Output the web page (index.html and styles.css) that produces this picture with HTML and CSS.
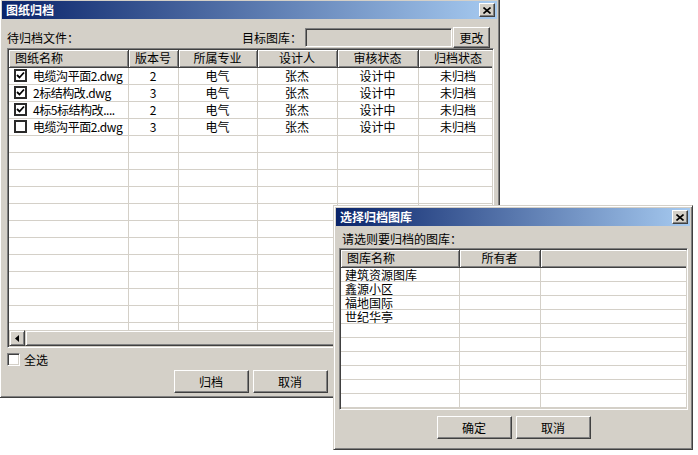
FILE: index.html
```html
<!DOCTYPE html>
<html lang="zh-CN">
<head>
    <meta charset="UTF-8">
    <title>图纸归档</title>
    <link rel="stylesheet" href="styles.css">
</head>
<body>

<div class="desktop">

    <!-- main dialog -->
    <div class="window win-archive">
        <div class="titlebar">
            <span class="title">图纸归档</span>
            <span class="close-btn">
                <svg width="8" height="7" viewBox="0 0 8 7"><path d="M0.5 0.5 L7.5 6.5 M7.5 0.5 L0.5 6.5" stroke="#000" stroke-width="1.6"/></svg>
            </span>
        </div>
        <div class="body">
            <div class="toolbar">
                <span class="label">待归档文件：</span>
                <span class="spacer"></span>
                <span class="label">目标图库：</span>
                <span class="textbox"></span>
                <button class="btn btn-small">更改</button>
            </div>

            <div class="listview list-files">
                <div class="list-inner">
                    <table class="grid">
                        <colgroup>
                            <col style="width:119px">
                            <col style="width:50px">
                            <col style="width:79px">
                            <col style="width:80px">
                            <col style="width:81px">
                            <col style="width:80px">
                        </colgroup>
                        <thead>
                            <tr>
                                <th class="left">图纸名称</th>
                                <th>版本号</th>
                                <th>所属专业</th>
                                <th>设计人</th>
                                <th>审核状态</th>
                                <th>归档状态</th>
                            </tr>
                        </thead>
                        <tbody>
                            <tr>
                                <td class="name"><div class="cell-flex"><span class="check"><svg width="9" height="9" viewBox="0 0 9 9"><path d="M1 4 L3.5 6.5 L8 1.5" stroke="#000" stroke-width="1.8" fill="none"/></svg></span><span class="file">电缆沟平面2.dwg</span></div></td>
                                <td>2</td><td>电气</td><td>张杰</td><td>设计中</td><td>未归档</td>
                            </tr>
                            <tr>
                                <td class="name"><div class="cell-flex"><span class="check"><svg width="9" height="9" viewBox="0 0 9 9"><path d="M1 4 L3.5 6.5 L8 1.5" stroke="#000" stroke-width="1.8" fill="none"/></svg></span><span class="file">2标结构改.dwg</span></div></td>
                                <td>3</td><td>电气</td><td>张杰</td><td>设计中</td><td>未归档</td>
                            </tr>
                            <tr>
                                <td class="name"><div class="cell-flex"><span class="check"><svg width="9" height="9" viewBox="0 0 9 9"><path d="M1 4 L3.5 6.5 L8 1.5" stroke="#000" stroke-width="1.8" fill="none"/></svg></span><span class="file">4标5标结构改....</span></div></td>
                                <td>2</td><td>电气</td><td>张杰</td><td>设计中</td><td>未归档</td>
                            </tr>
                            <tr>
                                <td class="name"><div class="cell-flex"><span class="check"></span><span class="file">电缆沟平面2.dwg</span></div></td>
                                <td>3</td><td>电气</td><td>张杰</td><td>设计中</td><td>未归档</td>
                            </tr>
                            <tr><td></td><td></td><td></td><td></td><td></td><td></td></tr>
                            <tr><td></td><td></td><td></td><td></td><td></td><td></td></tr>
                            <tr><td></td><td></td><td></td><td></td><td></td><td></td></tr>
                            <tr><td></td><td></td><td></td><td></td><td></td><td></td></tr>
                            <tr><td></td><td></td><td></td><td></td><td></td><td></td></tr>
                            <tr><td></td><td></td><td></td><td></td><td></td><td></td></tr>
                            <tr><td></td><td></td><td></td><td></td><td></td><td></td></tr>
                            <tr><td></td><td></td><td></td><td></td><td></td><td></td></tr>
                            <tr><td></td><td></td><td></td><td></td><td></td><td></td></tr>
                            <tr><td></td><td></td><td></td><td></td><td></td><td></td></tr>
                            <tr><td></td><td></td><td></td><td></td><td></td><td></td></tr>
                            <tr><td></td><td></td><td></td><td></td><td></td><td></td></tr>
                        </tbody>
                    </table>
                </div>
                <div class="hscroll">
                    <span class="scroll-btn">
                        <svg width="4" height="7" viewBox="0 0 4 7"><path d="M4 0 L0 3.5 L4 7 Z" fill="#000"/></svg>
                    </span>
                    <span class="scroll-thumb"></span>
                </div>
            </div>

            <div class="select-all">
                <span class="check-classic"></span>
                <span>全选</span>
            </div>

            <div class="actions">
                <button class="btn">归档</button>
                <button class="btn">取消</button>
            </div>
        </div>
    </div>

    <!-- library picker -->
    <div class="window win-library">
        <div class="titlebar">
            <span class="title">选择归档图库</span>
            <span class="close-btn">
                <svg width="8" height="7" viewBox="0 0 8 7"><path d="M0.5 0.5 L7.5 6.5 M7.5 0.5 L0.5 6.5" stroke="#000" stroke-width="1.6"/></svg>
            </span>
        </div>
        <div class="body">
            <div class="prompt">请选则要归档的图库：</div>

            <div class="listview list-libs">
                <div class="list-inner">
                    <table class="grid grid-small">
                        <colgroup>
                            <col style="width:118px">
                            <col style="width:81px">
                            <col style="width:148px">
                        </colgroup>
                        <thead>
                            <tr>
                                <th class="left">图库名称</th>
                                <th>所有者</th>
                                <th></th>
                            </tr>
                        </thead>
                        <tbody>
                            <tr><td class="name">建筑资源图库</td><td></td><td></td></tr>
                            <tr><td class="name">鑫源小区</td><td></td><td></td></tr>
                            <tr><td class="name">福地国际</td><td></td><td></td></tr>
                            <tr><td class="name">世纪华亭</td><td></td><td></td></tr>
                            <tr><td></td><td></td><td></td></tr>
                            <tr><td></td><td></td><td></td></tr>
                            <tr><td></td><td></td><td></td></tr>
                            <tr><td></td><td></td><td></td></tr>
                            <tr><td></td><td></td><td></td></tr>
                            <tr><td></td><td></td><td></td></tr>
                        </tbody>
                    </table>
                </div>
            </div>

            <div class="actions">
                <button class="btn">确定</button>
                <button class="btn">取消</button>
            </div>
        </div>
    </div>

</div>

</body>
</html>
```

FILE: styles.css
```css
* {
    box-sizing: border-box;
}

body {
    margin: 0;
    background: #fff;
    font-family: "Noto Sans CJK SC", "Liberation Sans", sans-serif;
    font-size: 12px;
    color: #000;
}

.desktop {
    position: relative;
    width: 698px;
    height: 455px;
    overflow: hidden;
}

/* classic window frame */
.window {
    position: absolute;
    background: #d4d0c8;
    border: 1px solid;
    border-color: #d4d0c8 #404040 #404040 #d4d0c8;
    box-shadow: inset 1px 1px #fff, inset -1px -1px #808080;
    padding: 2px;
    display: flex;
    flex-direction: column;
}

.win-archive {
    left: -1px;
    top: -2px;
    width: 501px;
    height: 400px;
}

.win-library {
    left: 333px;
    top: 205px;
    width: 360px;
    height: 245px;
}

.titlebar {
    height: 18px;
    flex: none;
    display: flex;
    align-items: center;
    padding: 0 2px 0 4px;
    background: linear-gradient(to right, #0a246a, #a6caf0);
}

.title {
    flex: 1;
    color: #fff;
    font-weight: 700;
    line-height: 1;
}

.close-btn {
    width: 16px;
    height: 14px;
    display: flex;
    align-items: center;
    justify-content: center;
    background: #d4d0c8;
    border: 1px solid;
    border-color: #fff #404040 #404040 #fff;
    box-shadow: inset -1px -1px #808080;
}

.body {
    flex: 1;
    display: flex;
    flex-direction: column;
}

.win-archive .body {
    padding: 0 3px 0 5px;
}

.win-library .body {
    padding: 0 2px 0 3px;
}

/* top row */
.toolbar {
    margin-top: 8px;
    height: 21px;
    display: flex;
    align-items: center;
    padding-right: 4px;
}

.label {
    line-height: 1;
}

.spacer {
    flex: 1;
}

.textbox {
    width: 147px;
    height: 19px;
    margin-left: 3px;
    background: #d4d0c8;
    border: 1px solid;
    border-color: #808080 #fff #fff #808080;
    box-shadow: inset 1px 1px #404040, inset -1px -1px #d4d0c8;
}

.btn {
    width: 75px;
    height: 23px;
    padding: 0;
    font-family: inherit;
    font-size: 12px;
    color: #000;
    background: #d4d0c8;
    border: 1px solid;
    border-color: #fff #404040 #404040 #fff;
    box-shadow: inset -1px -1px #808080;
}

.btn-small {
    width: 37px;
    height: 21px;
    margin-left: 1px;
}

/* list views */
.listview {
    display: flex;
    flex-direction: column;
    background: #fff;
    border: 1px solid;
    border-color: #808080 #fff #fff #808080;
    box-shadow: inset 1px 1px #404040, inset -1px -1px #d4d0c8;
    padding: 1px;
    overflow: hidden;
}

.list-files {
    height: 300px;
}

.list-libs {
    height: 162px;
}

.list-inner {
    flex: 1;
    overflow: hidden;
}

.grid {
    table-layout: fixed;
    border-collapse: collapse;
    width: 489px;
}

.grid-small {
    width: 347px;
}

.grid th {
    height: 17px;
    padding: 0;
    font-weight: 400;
    line-height: 1;
    text-align: center;
    background: #d4d0c8;
    border-right: 1px solid #404040;
    border-bottom: 1px solid #404040;
    box-shadow: inset 1px 1px #fff, inset -1px -1px #808080;
}

.grid th.left {
    text-align: left;
    padding-left: 6px;
}

.grid td {
    height: 17px;
    padding: 0;
    line-height: 1;
    text-align: center;
    white-space: nowrap;
    border-right: 1px solid #d4d0c8;
    border-bottom: 1px solid #d4d0c8;
}

.grid-small td {
    height: 14px;
    padding-top: 1px;
    line-height: 12px;
}

.grid td.name {
    text-align: left;
    padding-left: 5px;
}

.cell-flex {
    display: flex;
    align-items: center;
    gap: 6px;
}

.file {
    letter-spacing: -0.45px;
}

.list-libs .grid td.name {
    padding-left: 4px;
}

.check {
    flex: none;
    display: flex;
    align-items: center;
    justify-content: center;
    width: 13px;
    height: 13px;
    background: #fff;
    border: 2px solid #2a2a2a;
}

/* horizontal scroll bar */
.hscroll {
    height: 16px;
    flex: none;
    display: flex;
    background: #e8e6e0;
}

.scroll-btn,
.scroll-thumb {
    background: #d4d0c8;
    border: 1px solid;
    border-color: #d4d0c8 #404040 #404040 #d4d0c8;
    box-shadow: inset 1px 1px #fff, inset -1px -1px #808080;
}

.scroll-btn {
    width: 16px;
    display: flex;
    align-items: center;
    justify-content: center;
}

.scroll-thumb {
    flex: 1;
}

/* bottom of main dialog */
.select-all {
    margin-top: 4px;
    height: 14px;
    display: flex;
    align-items: center;
    gap: 4px;
}

.check-classic {
    width: 13px;
    height: 13px;
    background: #fff;
    border: 1px solid;
    border-color: #808080 #fff #fff #808080;
    box-shadow: inset 1px 1px #404040, inset -1px -1px #d4d0c8;
}

.actions {
    display: flex;
    justify-content: center;
    gap: 4px;
}

.win-archive .actions {
    margin-top: 4px;
}

.win-library .actions {
    margin-top: 6px;
}

.prompt {
    height: 22px;
    padding-top: 7px;
    line-height: 1;
    padding-left: 3px;
}
```
